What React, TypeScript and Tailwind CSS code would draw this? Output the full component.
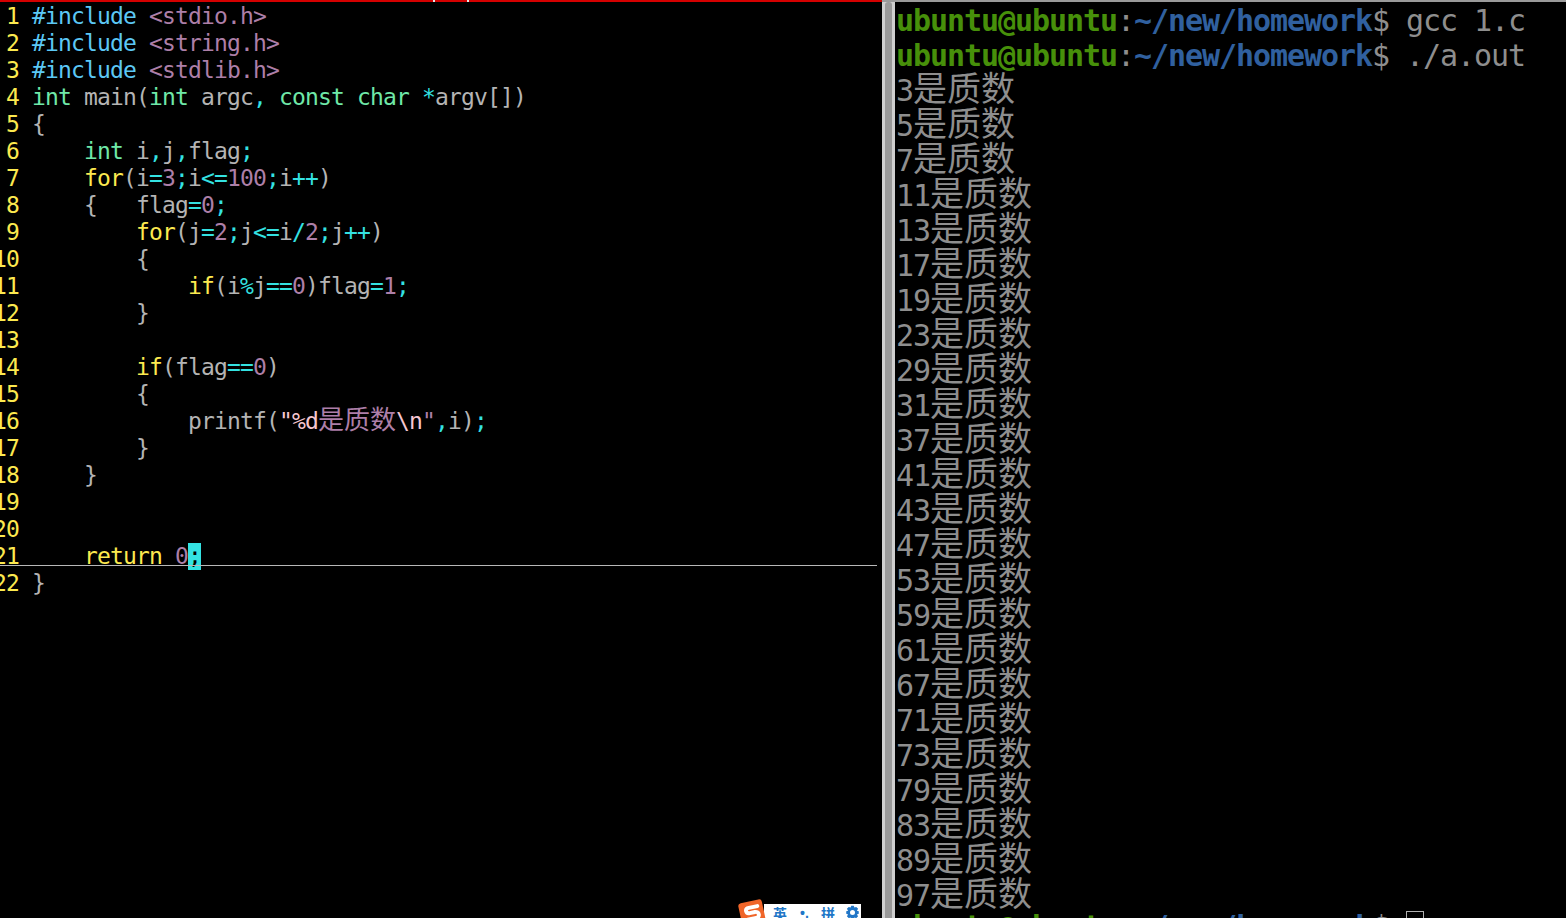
import React from "react";

type Tok = [string, string];

const txt = "text-[#b4b4b4]";
const pre = "text-[#5cc8f5]";
const str = "text-[#ad7fa8]";
const typ = "text-[#6fe8a8]";
const key = "text-[#fce94f]";
const op = "text-[#34e2e2]";
const esc = "text-[#f5c6d0]";

const code: Tok[][] = [
  [["#include", pre], [" ", txt], ["<stdio.h>", str]],
  [["#include", pre], [" ", txt], ["<string.h>", str]],
  [["#include", pre], [" ", txt], ["<stdlib.h>", str]],
  [["int", typ], [" main(", txt], ["int", typ], [" argc", txt], [",", op], [" ", txt], ["const", typ], [" ", txt], ["char", typ], [" ", txt], ["*", op], ["argv[])", txt]],
  [["{", txt]],
  [["    ", txt], ["int", typ], [" i", txt], [",", op], ["j", txt], [",", op], ["flag", txt], [";", op]],
  [["    ", txt], ["for", key], ["(i", txt], ["=", op], ["3", str], [";", op], ["i", txt], ["<=", op], ["100", str], [";", op], ["i", txt], ["++", op], [")", txt]],
  [["    {   flag", txt], ["=", op], ["0", str], [";", op]],
  [["        ", txt], ["for", key], ["(j", txt], ["=", op], ["2", str], [";", op], ["j", txt], ["<=", op], ["i", txt], ["/", op], ["2", str], [";", op], ["j", txt], ["++", op], [")", txt]],
  [["        {", txt]],
  [["            ", txt], ["if", key], ["(i", txt], ["%", op], ["j", txt], ["==", op], ["0", str], [")flag", txt], ["=", op], ["1", str], [";", op]],
  [["        }", txt]],
  [],
  [["        ", txt], ["if", key], ["(flag", txt], ["==", op], ["0", str], [")", txt]],
  [["        {", txt]],
  [["            printf(", txt], ['"', esc], ["%d", esc], ["是质数", str], ["\\n", esc], ['"', str], [",", op], ["i", txt], [")", txt], [";", op]],
  [["        }", txt]],
  [["    }", txt]],
  [],
  [],
  [["    ", txt], ["return", key], [" ", txt], ["0", str]],
  [["}", txt]],
];

const primes = [3, 5, 7, 11, 13, 17, 19, 23, 29, 31, 37, 41, 43, 47, 53, 59, 61, 67, 71, 73, 79, 83, 89, 97];

function Prompt() {
  return (
    <>
      <span className="font-bold text-[#47900a]">ubuntu@ubuntu</span>
      <span>:</span>
      <span className="font-bold text-[#30609f]">~/new/homework</span>
      <span>$ </span>
    </>
  );
}

export default function App() {
  return (
    <div className="flex h-screen w-full flex-col overflow-hidden bg-black font-['DejaVu_Sans_Mono','Noto_Sans_CJK_SC',monospace]">
      {/* top edge of the two windows */}
      <div className="flex h-[2px] shrink-0">
        <div className="w-[433px] bg-[#d40000]" />
        <div className="w-[2px] bg-[#e8e8e8]" />
        <div className="w-[32px] bg-[#d40000]" />
        <div className="w-[2px] bg-[#e8e8e8]" />
        <div className="w-[413px] bg-[#d40000]" />
        <div className="flex-1 bg-[#9a9a9a]" />
      </div>

      <div className="flex min-h-0 flex-1">
        {/* vim */}
        <div className="relative w-[882px] shrink-0 pt-px text-[23px] tracking-[-0.85px]">
          {code.map((line, i) => (
            <div key={i} className="relative flex h-[27px] items-center leading-[27px] whitespace-pre">
              <div className="flex w-[19px] shrink-0 justify-end text-[#fce94f]">{i + 1}</div>
              <div className="ml-[13px]">
                {line.map(([t, c], j) =>
                  /[是质数]/.test(t) ? (
                    <span key={j} className={`font-['Noto_Sans_CJK_SC',sans-serif] text-[26px] leading-[0] tracking-normal ${c}`}>
                      {t}
                    </span>
                  ) : (
                    <span key={j} className={c}>
                      {t}
                    </span>
                  )
                )}
                {i === 20 && <span className="inline-block w-[13px] bg-[#34e2e2] text-black">;</span>}
              </div>
              {i === 20 && <div className="absolute top-[22px] left-0 h-px w-[877px] bg-[#b8b8b8]" />}
            </div>
          ))}

          {/* sogou input bar */}
          <div className="absolute top-[897px] left-[740px] flex items-start">
            <div className="mt-[2px] flex h-[24px] w-[24px] -rotate-12 items-center justify-center rounded-[3px] bg-[#f0662a]">
              <svg viewBox="0 0 24 24" className="h-[21px] w-[21px]" fill="none" stroke="#fff" strokeWidth="4.5" strokeLinecap="round">
                <path d="M19 5H9c-5 0-5 6 0 6h6c5 0 5 7 0 7H5" />
              </svg>
            </div>
            <div className="mt-[5px] flex h-[20px] w-[97px] items-start bg-white pt-[1px] pl-[9px] font-['Noto_Sans_CJK_SC',sans-serif] text-[14px] leading-[16px] font-bold tracking-normal text-[#2176c7]">
              <span className="w-[27px]">英</span>
              <span className="w-[21px] font-['Liberation_Sans',sans-serif]">•,</span>
              <span className="w-[24px]">拼</span>
              <svg viewBox="0 0 24 24" className="h-[15px] w-[15px]" fill="#2176c7">
                <path d="M10 1h4l1 3 3-1 3 3-2 3 3 1v4l-3 1 2 3-3 3-3-1-1 3h-4l-1-3-3 1-3-3 2-3-3-1v-4l3-1-2-3 3-3 3 1zM12 8a4 4 0 100 8 4 4 0 000-8z" fillRule="evenodd" />
              </svg>
            </div>
          </div>
        </div>

        {/* scrollbar between the panes */}
        <div className="flex w-[13px] shrink-0 justify-center bg-[#cfcfcf]">
          <div className="h-full w-[7px] rounded-t-[3px] bg-[#999999]" />
        </div>

        {/* terminal */}
        <div className="min-w-0 flex-1 pt-px pl-px text-[30px] leading-[35px] tracking-[-1.06px] whitespace-pre text-[#8e8e8e]">
          <div className="h-[35px]">
            <Prompt />
            gcc 1.c
          </div>
          <div className="h-[35px]">
            <Prompt />
            ./a.out
          </div>
          {primes.map((p) => (
            <div key={p} className="h-[35px]">
              {p}
              <span className="font-['Noto_Sans_CJK_SC',sans-serif] text-[34px] leading-[0] tracking-normal">是质数</span>
            </div>
          ))}
          <div className="flex h-[35px]">
            <span className="-mt-[4px]">
              <Prompt />
            </span>
            <span className="-mt-[2px] h-[26px] w-[18px] border border-[#b0b0b0]" />
          </div>
        </div>
      </div>
    </div>
  );
}
